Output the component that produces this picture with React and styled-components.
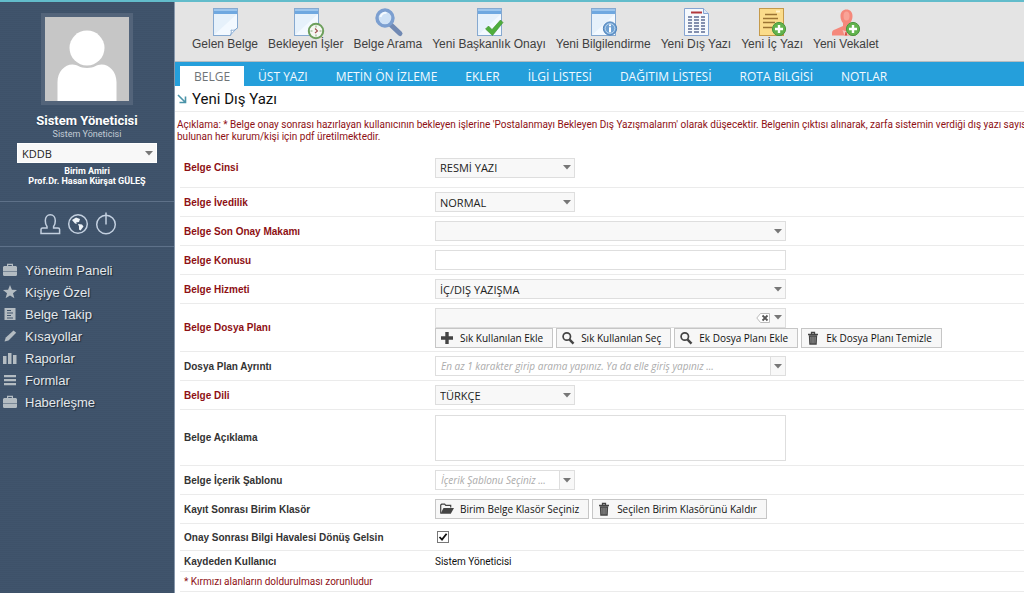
import { useState } from "react";
import styled, { createGlobalStyle } from "styled-components";

const arial = `"Liberation Sans", Arial, sans-serif`;
const sans = `Roboto, ${arial}`;
const ui = `"Open Sans", "Segoe UI", sans-serif`;

const GlobalStyle = createGlobalStyle`
  * {
    box-sizing: border-box;
  }

  body {
    margin: 0;
    background: #fff;
    font-family: ${sans};
    font-size: 11px;
    color: #111;
  }

  button, input, select, textarea {
    margin: 0;
    font: inherit;
    color: inherit;
  }
`;

const Page = styled.div`
  display: flex;
  min-height: 100vh;
  border-top: 2px solid #62bccb;
`;

/* ---------- sidebar ---------- */

const Sidebar = styled.aside`
  flex: 0 0 175px;
  border-right: 1px solid #8797ab;
  background-color: #40546c;
  background-image: repeating-linear-gradient(0deg, rgba(0, 0, 0, 0.03) 0 1px, transparent 1px 2px);
  color: #fff;
`;

const Profile = styled.section`
  display: flex;
  flex-direction: column;
  align-items: center;
  height: 200px;
  padding-top: 11px;
  border-bottom: 1px solid #5e7189;
  text-align: center;
`;

const Avatar = styled.svg`
  display: block;
  width: 92px;
  height: 92px;
  border: 4px solid #53647a;
  background: #c6c6c6;
`;

const UserName = styled.h2`
  margin: 8px 0 0;
  font-size: 13px;
  line-height: 15px;
  text-shadow: 0 1px 1px #26384c;
`;

const UserRole = styled.p`
  margin: 0 0 3px;
  font-size: 9px;
  line-height: 12px;
  color: #c3ccd6;
`;

const Chief = styled.p`
  margin: 3px 0 0;
  font-size: 9px;
  font-weight: bold;
  line-height: 10px;
`;

const Shortcuts = styled.div`
  display: flex;
  justify-content: center;
  align-items: center;
  gap: 4px;
  height: 45px;
  padding-right: 18px;
  border-bottom: 1px solid #5e7189;
`;

const RoundButton = styled.button`
  display: flex;
  padding: 0;
  border: 0;
  background: none;
  color: #c3d0e0;
  cursor: pointer;

  svg {
    width: 24px;
    height: 24px;
  }
`;

const Menu = styled.nav`
  display: flex;
  flex-direction: column;
  padding: 12px 0 0 3px;
`;

const MenuLink = styled.a`
  display: flex;
  align-items: center;
  gap: 8px;
  height: 22px;
  font-family: ${arial};
  font-size: 13px;
  color: #e4e8ec;
  text-decoration: none;
  text-shadow: 1px 1px 1px #1f2c3a;

  svg {
    width: 14px;
    height: 14px;
    fill: #b4bcc2;
  }
`;

/* ---------- header ---------- */

const Main = styled.main`
  flex: 1;
  min-width: 0;
  overflow: hidden;
`;

const Toolbar = styled.div`
  display: flex;
  gap: 10px;
  height: 60px;
  padding: 5px 17px 0;
  border-bottom: 1px solid #b5bcc0;
  background: #e4e4e4;
`;

const ToolButton = styled.button`
  display: flex;
  flex-direction: column;
  align-items: center;
  height: 46px;
  padding: 0;
  border: 0;
  background: none;
  color: #404040;
  font-family: ${arial};
  font-size: 12px;
  line-height: 14px;
  white-space: nowrap;
  cursor: pointer;

  svg {
    width: 32px;
    height: 30px;
    overflow: visible;
  }
`;

const Tabs = styled.div`
  display: flex;
  align-items: flex-end;
  height: 24px;
  padding-left: 5px;
  background: #259fdb;
`;

const Tab = styled.button`
  height: 20px;
  padding: 0 14px;
  border: 0;
  background: ${({ $active }) => ($active ? "#fff" : "transparent")};
  color: ${({ $active }) => ($active ? "#6f7477" : "#f2faff")};
  font-family: ${ui};
  font-size: 12px;
  line-height: 22px;
  white-space: nowrap;
  cursor: pointer;
`;

const Title = styled.h1`
  display: flex;
  align-items: center;
  gap: 5px;
  height: 26px;
  margin: 0;
  padding-left: 2px;
  border-bottom: 1px solid #ececec;
  font-size: 15px;
  font-weight: normal;

  svg {
    width: 10px;
    height: 10px;
  }
`;

const Notice = styled.p`
  height: 36px;
  margin: 0;
  padding: 7px 0 0 2px;
  color: #8e1014;
  font-size: 10px;
  line-height: 12px;
  white-space: nowrap;
`;

/* ---------- form ---------- */

const Form = styled.form`
  margin-left: 5px;
`;

const Row = styled.div`
  display: grid;
  grid-template-columns: 251px 1fr;
  align-items: center;
  min-height: ${({ $height }) => $height || 29}px;
  padding-left: 4px;
  border-bottom: 1px solid #ebebeb;
`;

const Label = styled.label`
  color: ${({ $required }) => ($required ? "#8e1014" : "#333")};
  font-family: ${arial};
  font-size: 10px;
  font-weight: bold;
`;

const Value = styled.div`
  font-size: 10px;
`;

const Stack = styled.div`
  display: grid;
  width: ${({ $wide }) => ($wide ? 351 : 140)}px;
  height: 20px;
  border: 1px solid ${({ $plain }) => ($plain ? "#fff" : "#dedede")};
  background: #f8f8f8;
  font-family: ${ui};
  font-size: 11px;

  > * {
    grid-area: 1 / 1;
  }

  > svg {
    justify-self: end;
    align-self: center;
    width: 8px;
    height: 5px;
    margin-right: 3px;
    pointer-events: none;
  }
`;

const Select = styled.select`
  width: 100%;
  height: 18px;
  padding: 0 18px 0 4px;
  border: 0;
  background: transparent;
  appearance: none;
  color: #222;
`;

const Combo = styled.div`
  display: flex;
  width: ${({ $wide }) => ($wide ? 351 : 140)}px;
  height: 20px;
  border: 1px solid #dedede;
  background: ${({ $filled }) => ($filled ? "#f8f8f8" : "#fff")};
  font-family: ${ui};
  font-size: 10px;
`;

const ComboInput = styled.input`
  flex: 1;
  min-width: 0;
  padding: 0 0 0 5px;
  border: 0;
  background: transparent;

  &::placeholder {
    color: #ababab;
    font-style: italic;
  }
`;

const ComboButton = styled.button`
  display: flex;
  align-items: center;
  justify-content: center;
  width: 15px;
  padding: 0;
  border: 0;
  border-left: ${({ $divided }) => ($divided ? "1px solid #dedede" : 0)};
  background: ${({ $divided }) => ($divided ? "#f8f8f8" : "none")};
  cursor: pointer;
`;

const TextInput = styled.input`
  display: block;
  width: 351px;
  height: 20px;
  padding: 0 5px;
  border: 1px solid #dedede;
`;

const TextArea = styled.textarea`
  display: block;
  width: 351px;
  height: 46px;
  padding: 3px 5px;
  border: 1px solid #dedede;
  resize: none;
`;

const Actions = styled.div`
  display: flex;
  gap: 3px;
`;

const ActionButton = styled.button`
  display: flex;
  align-items: center;
  gap: 6px;
  height: 20px;
  padding: 0 9px 0 4px;
  border: 1px solid #c6c6c6;
  background: #f7f7f7;
  color: #111;
  font-family: ${ui};
  font-size: 10px;
  white-space: nowrap;
  cursor: pointer;

  svg {
    width: 14px;
    height: 14px;
  }
`;

const CheckBox = styled.input`
  display: block;
  appearance: none;
  width: 12px;
  height: 12px;
  margin-left: 2px;
  border: 1px solid #777;
  background: #fff;

  &:checked {
    background: #fff
      url("data:image/svg+xml,%3Csvg xmlns='http://www.w3.org/2000/svg' viewBox='0 0 10 10'%3E%3Cpath d='M1.5 5 4 7.6 8.6 1.8' fill='none' stroke='%23111' stroke-width='1.8'/%3E%3C/svg%3E");
  }
`;

const Footnote = styled.p`
  height: 20px;
  margin: 0;
  padding-left: 4px;
  border-bottom: 1px solid #ebebeb;
  color: #8e1014;
  font-size: 10px;
  line-height: 20px;
`;

/* ---------- drawings ---------- */

const Caret = () => (
  <svg viewBox="0 0 8 5" width="8" height="5">
    <path d="M0 0h8L4 4.6z" fill="#777" />
  </svg>
);

const Sheet = () => (
  <>
    <rect x="4.5" y="1.5" width="24" height="27" fill="#e6f1fb" stroke="#86a9d0" />
    <rect x="5" y="2" width="23" height="5" fill="#6fa8e0" />
    <rect x="5" y="2" width="23" height="2" fill="#9cc6ee" />
    <path d="M5 28 28 7v21z" fill="#f3f9ff" />
  </>
);

const Plus = () => (
  <>
    <circle cx="23" cy="22" r="6.6" fill="#62b34d" stroke="#4b9640" />
    <path d="M23 18v8M19 22h8" stroke="#fff" strokeWidth="2.4" />
  </>
);

const InboxIcon = () => (
  <svg viewBox="0 0 32 30">
    <Sheet />
    <path d="M29.2 20.5v8.7H21z" fill="#e4e4e4" />
    <path d="M21 28.5c1.5-1.5 1.5-3.5 1-5.5 2 .6 4.500.4 6.500-2.5z" fill="#fff" stroke="#86a9d0" />
  </svg>
);

const PendingIcon = () => (
  <svg viewBox="0 0 32 30">
    <Sheet />
    <circle cx="26" cy="24" r="7.2" fill="#f5f7f2" stroke="#6d9f5c" strokeWidth="2" />
    <path d="M26 18.5v2M26 27.5v2M20.5 24h2M29.5 24h2" stroke="#8aa97e" />
    <path d="m25 21.5 2.500 2.500-2.500 2" fill="none" stroke="#a05050" strokeWidth="1.1" />
  </svg>
);

const SearchDocIcon = () => (
  <svg viewBox="0 0 32 30">
    <path d="m19 18 9 8.5" stroke="#7189b3" strokeWidth="5" strokeLinecap="round" />
    <circle cx="13" cy="11" r="8" fill="#cfe2f6" stroke="#7c9fd0" strokeWidth="3.4" />
    <path d="M8.5 10a5 5 0 0 1 6-4" fill="none" stroke="#f4faff" strokeWidth="2" />
  </svg>
);

const ApprovalIcon = () => (
  <svg viewBox="0 0 32 30">
    <Sheet />
    <path d="m12.5 22 3-3 3.500 3.500L27.500 13l2.500 2.500-10.500 13z" fill="#4fae3c" stroke="#3b8d2d" strokeWidth=".6" />
  </svg>
);

const InfoIcon = () => (
  <svg viewBox="0 0 32 30">
    <Sheet />
    <circle cx="23" cy="21.5" r="6.6" fill="#6fa1d3" stroke="#4b80ba" />
    <circle cx="23" cy="21.5" r="4.8" fill="none" stroke="#c9dff3" strokeWidth=".8" />
    <path d="M23 17.5v1.800M23 20.300v5" stroke="#fff" strokeWidth="2" />
  </svg>
);

const OutgoingIcon = () => (
  <svg viewBox="0 0 32 30">
    <path d="M4.5 1.5h19l5 5v22h-24z" fill="#f6f9fd" stroke="#86a4d2" />
    <path d="M23.5 1.5v5h5" fill="#dfe9f6" stroke="#86a4d2" />
    <path d="M11 5.5h11" stroke="#b3383c" strokeWidth="2" />
    <path d="M8 10h18M8 13h18M8 16h18M8 19h18M8 22h18M8 25h18" stroke="#5d6c94" strokeWidth="1.3" strokeDasharray="4 2 5 2" />
  </svg>
);

const InternalIcon = () => (
  <svg viewBox="0 0 32 30">
    <rect x="3.5" y="1.5" width="24" height="27" fill="#fbdc8b" stroke="#c59a4a" />
    <path d="M9 7.5h12M7 11.5h15M7 15.5h12M7 20.5h9" stroke="#9b7434" strokeWidth="1.3" />
    <path d="M20 4.5h4" stroke="#fff3c9" strokeWidth="2" />
    <Plus />
  </svg>
);

const ProxyIcon = () => (
  <svg viewBox="0 0 32 30">
    <path d="M10.500 9c0-4 2.500-6.500 6-6.500s6 2.500 6 6.500c0 3-1 5.500-2.500 7v3l6 3.500v6H2V26c0-2 1-3 3-3.500l8-3.500v-3c-1.500-1.500-2.500-4-2.500-7z" fill="#f5887b" />
    <ellipse cx="16.5" cy="9" rx="3" ry="4.5" fill="#f9a397" />
    <path d="m12.5 23 2 5.500h4l1-5.500-3 1.500z" fill="#f7c4bd" />
    <path d="m15.500 25-.8 3.500h2.600l-.8-3.500z" fill="#d64a40" />
    <Plus />
  </svg>
);

const menuShapes = {
  bag: <path d="M4 3V.8h6V3h3l1 1v4H0V4l1-1zm1.200 0h3.600V2H5.200zM0 8.600h14v3.600l-1 .8H1l-1-.8z" />,
  star: <path d="m7 0 1.900 4.800 5.100.3-4 3.200 1.400 5L7 10.500l-4.400 2.800L4 8.300 0 5.100l5.100-.3z" />,
  page: <path fillRule="evenodd" d="M1.500 1h11v12h-11zM4 3v1h4V3zm0 2.500v1h6v-1zM4 8v1h4V8zm0 2.500v1h6v-1z" />,
  pencil: <path d="m10.500 1.500 2.700 2.300-7.700 7.700-4 .9 1.300-3.800z" />,
  chart: <path d="M0 5h3.500v8H0zM5 2h3.500v11H5zM10 4h3.500v9H10z" />,
  lines: <path d="M1 2h12v2.200H1zM1 6h12v2.200H1zM1 10h12v2.200H1z" />,
};

const AddGlyph = () => (
  <svg viewBox="0 0 14 14">
    <path d="M5.300 1h3.400v4.300H13v3.400H8.700V13H5.300V8.700H1V5.300h4.300z" fill="#444" />
  </svg>
);

const FindGlyph = () => (
  <svg viewBox="0 0 14 14" fill="none" stroke="#444">
    <circle cx="5.8" cy="5.5" r="3.7" strokeWidth="1.7" />
    <path d="m8.600 8.600 3.900 4" strokeWidth="2.4" />
  </svg>
);

const TrashGlyph = () => (
  <svg viewBox="0 0 14 14" fill="none" stroke="#444">
    <path d="M2 3.500h10M5.500 3V1.500h3V3" strokeWidth="1.3" />
    <path d="M3.500 5h7l-.4 8H3.900z" fill="#888" strokeWidth="1.3" />
    <path d="M5.900 6v6M8.100 6v6" strokeWidth=".7" />
  </svg>
);

const FolderGlyph = () => (
  <svg viewBox="0 0 14 14">
    <path d="M.7 11.500V3l1-.8h3l1 1.200h5v2" fill="none" stroke="#444" strokeWidth="1.2" />
    <path d="M3.500 6H14l-3.200 5.800H.5z" fill="#444" />
  </svg>
);

/* ---------- data ---------- */

const tools = [
  ["Gelen Belge", InboxIcon],
  ["Bekleyen İşler", PendingIcon],
  ["Belge Arama", SearchDocIcon],
  ["Yeni Başkanlık Onayı", ApprovalIcon],
  ["Yeni Bilgilendirme", InfoIcon],
  ["Yeni Dış Yazı", OutgoingIcon],
  ["Yeni İç Yazı", InternalIcon],
  ["Yeni Vekalet", ProxyIcon],
];

const tabs = ["BELGE", "ÜST YAZI", "METİN ÖN İZLEME", "EKLER", "İLGİ LİSTESİ", "DAĞITIM LİSTESİ", "ROTA BİLGİSİ", "NOTLAR"];

const menu = [
  ["Yönetim Paneli", "bag"],
  ["Kişiye Özel", "star"],
  ["Belge Takip", "page"],
  ["Kısayollar", "pencil"],
  ["Raporlar", "chart"],
  ["Formlar", "lines"],
  ["Haberleşme", "bag"],
];

function Dropdown({ id, value, wide, plain, label }) {
  return (
    <Stack $wide={wide} $plain={plain}>
      <Select id={id} aria-label={label} defaultValue={value}>
        <option value={value}>{value}</option>
      </Select>
      <Caret />
    </Stack>
  );
}

function Field({ id, label, required, height, children }) {
  return (
    <Row $height={height}>
      <Label htmlFor={id} $required={required}>{label}</Label>
      <Value>{children}</Value>
    </Row>
  );
}

function App() {
  const [active, setActive] = useState("BELGE");

  return (
    <Page>
      <GlobalStyle />
      <Sidebar>
        <Profile>
          <Avatar viewBox="0 0 84 84">
            <circle cx="42" cy="31" r="17.5" fill="#fff" />
            <path d="M12.500 84V65c0-10 7-17.500 15-17.500 5 0 7 3.500 14.500 3.500s9.500-3.500 14.500-3.500c8 0 15 7.500 15 17.500v19z" fill="#fff" />
          </Avatar>
          <UserName>Sistem Yöneticisi</UserName>
          <UserRole>Sistem Yöneticisi</UserRole>
          <Dropdown label="Birim" value="KDDB" plain />
          <Chief>Birim Amiri<br />Prof.Dr. Hasan Kürşat GÜLEŞ</Chief>
        </Profile>
        <Shortcuts>
          <RoundButton aria-label="Profil">
            <svg viewBox="0 0 24 24" fill="none" stroke="currentColor" strokeWidth="1.5">
              <path d="M3 21.500v-4c0-1 .6-1.600 1.600-1.600h4.400v-1.400c-1.200-1.500-1.700-3.500-1.700-5.700 0-3.500 2-6 5-6s5 2.500 5 6c0 2.200-.5 4.200-1.700 5.700v1.400H20c1 0 1.600.6 1.600 1.600v4z" />
            </svg>
          </RoundButton>
          <RoundButton aria-label="Dil">
            <svg viewBox="0 0 24 24" fill="none" stroke="currentColor" strokeWidth="1.5">
              <circle cx="12" cy="12" r="9.3" />
              <path d="m6 8 4-2.500 4 1.500-1 3-3 .5 1 1.500-2-.5zM12 12l4 .5 1.500 2-3 4-1.500-1v-3z" fill="#eef3f8" stroke="none" />
            </svg>
          </RoundButton>
          <RoundButton aria-label="Çıkış">
            <svg viewBox="0 0 24 24" fill="none" stroke="currentColor" strokeWidth="1.5">
              <circle cx="12" cy="12.5" r="9.3" />
              <path d="M12 .5v12" />
            </svg>
          </RoundButton>
        </Shortcuts>
        <Menu>
          {menu.map(([text, shape]) => (
            <MenuLink key={text} href="#">
              <svg viewBox="0 0 14 14">{menuShapes[shape]}</svg>
              {text}
            </MenuLink>
          ))}
        </Menu>
      </Sidebar>

      <Main>
        <Toolbar>
          {tools.map(([text, Icon]) => (
            <ToolButton key={text}>
              <Icon />
              {text}
            </ToolButton>
          ))}
        </Toolbar>
        <Tabs role="tablist">
          {tabs.map((tab) => (
            <Tab key={tab} role="tab" aria-selected={tab === active} $active={tab === active} onClick={() => setActive(tab)}>
              {tab}
            </Tab>
          ))}
        </Tabs>
        <Title>
          <svg viewBox="0 0 10 10" fill="none" stroke="#4a93a8" strokeWidth="1.6">
            <path d="m1 1 7 7M8.500 2.500v6h-6" />
          </svg>
          Yeni Dış Yazı
        </Title>
        <Notice>
          Açıklama: * Belge onay sonrası hazırlayan kullanıcının bekleyen işlerine 'Postalanmayı Bekleyen Dış Yazışmalarım' olarak düşecektir. Belgenin çıktısı alınarak, zarfa sistemin verdiği dış yazı sayısı ya
          <br />
          bulunan her kurum/kişi için pdf üretilmektedir.
        </Notice>

        <Form onSubmit={(e) => e.preventDefault()}>
          <Field id="cins" label="Belge Cinsi" required height={40}>
            <Dropdown id="cins" value="RESMİ YAZI" />
          </Field>
          <Field id="ivedilik" label="Belge İvedilik" required>
            <Dropdown id="ivedilik" value="NORMAL" />
          </Field>
          <Field id="makam" label="Belge Son Onay Makamı" required>
            <Dropdown id="makam" value="" wide />
          </Field>
          <Field id="konu" label="Belge Konusu" required>
            <TextInput id="konu" />
          </Field>
          <Field id="hizmet" label="Belge Hizmeti" required>
            <Dropdown id="hizmet" value="İÇ/DIŞ YAZIŞMA" wide />
          </Field>
          <Field id="plan" label="Belge Dosya Planı" required height={48}>
            <Combo $wide $filled>
              <ComboInput id="plan" />
              <ComboButton type="button" aria-label="Temizle">
                <svg viewBox="0 0 14 10" width="14" height="10">
                  <path d="M4.500.5h9v9h-9L.8 5z" fill="#fff" stroke="#bbb" />
                  <path d="m6.500 2.500 5 5m0-5-5 5" stroke="#555" strokeWidth="1.8" />
                </svg>
              </ComboButton>
              <ComboButton type="button" aria-label="Aç"><Caret /></ComboButton>
            </Combo>
            <Actions>
              <ActionButton type="button"><AddGlyph />Sık Kullanılan Ekle</ActionButton>
              <ActionButton type="button"><FindGlyph />Sık Kullanılan Seç</ActionButton>
              <ActionButton type="button"><FindGlyph />Ek Dosya Planı Ekle</ActionButton>
              <ActionButton type="button"><TrashGlyph />Ek Dosya Planı Temizle</ActionButton>
            </Actions>
          </Field>
          <Field id="ayrinti" label="Dosya Plan Ayrıntı">
            <Combo $wide>
              <ComboInput id="ayrinti" placeholder="En az 1 karakter girip arama yapınız. Ya da elle giriş yapınız ..." />
              <ComboButton type="button" aria-label="Aç" $divided><Caret /></ComboButton>
            </Combo>
          </Field>
          <Field id="dil" label="Belge Dili" required>
            <Dropdown id="dil" value="TÜRKÇE" />
          </Field>
          <Field id="aciklama" label="Belge Açıklama" height={56}>
            <TextArea id="aciklama" />
          </Field>
          <Field id="sablon" label="Belge İçerik Şablonu">
            <Combo>
              <ComboInput id="sablon" placeholder="İçerik Şablonu Seçiniz ..." />
              <ComboButton type="button" aria-label="Aç" $divided><Caret /></ComboButton>
            </Combo>
          </Field>
          <Field id="klasor" label="Kayıt Sonrası Birim Klasör">
            <Actions>
              <ActionButton id="klasor" type="button"><FolderGlyph />Birim Belge Klasör Seçiniz</ActionButton>
              <ActionButton type="button"><TrashGlyph />Seçilen Birim Klasörünü Kaldır</ActionButton>
            </Actions>
          </Field>
          <Field id="havale" label="Onay Sonrası Bilgi Havalesi Dönüş Gelsin" height={27}>
            <CheckBox id="havale" type="checkbox" defaultChecked />
          </Field>
          <Field id="kaydeden" label="Kaydeden Kullanıcı" height={21}>
            <output id="kaydeden">Sistem Yöneticisi</output>
          </Field>
          <Footnote>* Kırmızı alanların doldurulması zorunludur</Footnote>
        </Form>
      </Main>
    </Page>
  );
}

export default App;
